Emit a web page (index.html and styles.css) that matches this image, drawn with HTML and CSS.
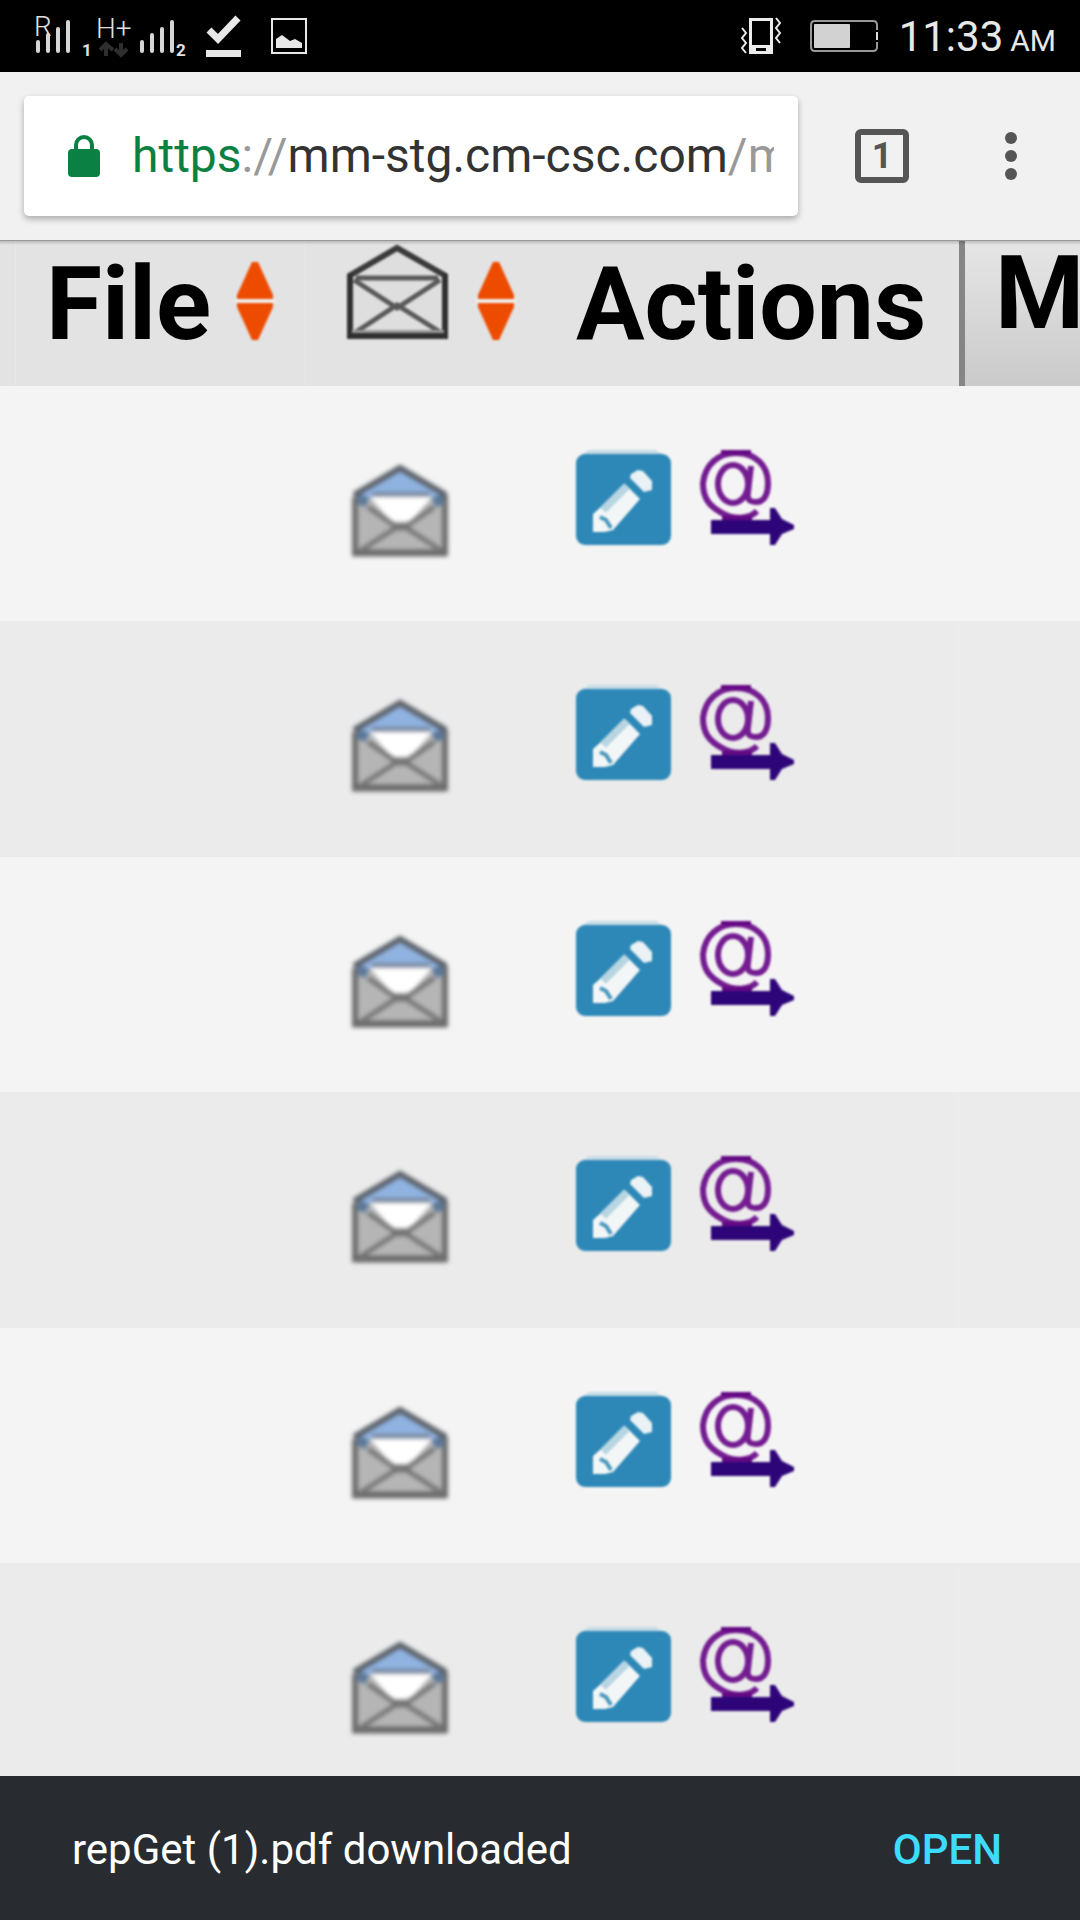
FILE: index.html
```html
<!DOCTYPE html>
<html lang="en">
<head>
<meta charset="utf-8">
<meta name="viewport" content="width=device-width, initial-scale=1">
<title>Messages</title>
<link rel="stylesheet" href="styles.css">
</head>
<body>
<svg class="defs" aria-hidden="true">
  <symbol id="envelope" viewBox="0 0 118 96">
    <path d="M18 32 64 6l47 26v63H18z" fill="#b5b5b5"/>
    <path d="M20 33 64 6l45 27-9 8-6-7H36l-7 8z" fill="#8fb2e0"/>
    <path d="M34 36h62L72 64H58z" fill="#fff"/>
    <path d="M19 36v59M109 34v61" stroke="#6c6c6c" stroke-width="6"/>
    <path d="M16 92h95" stroke="#6a6a6a" stroke-width="7"/>
    <path d="M18 34 64 7l46 27" fill="none" stroke="#5a6068" stroke-width="6"/>
    <path d="M36 33h58" stroke="#7787a0" stroke-width="4"/>
    <path d="M22 37l9 5M107 37l-9 5" stroke="#5b7898" stroke-width="10"/>
    <path d="M32 46l26 18h14l26-18M58 68 24 90M72 68l34 22" fill="none" stroke="#777" stroke-width="5"/>
    <path d="M56 66h18" stroke="#747474" stroke-width="7"/>
  </symbol>
  <symbol id="sort" viewBox="0 0 40 78">
    <path d="M17 0h6l15 33v4H2v-4zM2 41h36v4L23 78h-6L2 45z" fill="#ed4c00"/>
    <path d="M0 39h40" stroke="#f3efed" stroke-width="4"/>
  </symbol>
  <symbol id="edit" viewBox="0 0 96 96">
    <path d="M13 0h67l8 5H5z" fill="#c6dce7"/>
    <rect x="0" y="4" width="95" height="91" rx="9" fill="#2d88b7"/>
    <path d="M50 35 64 49 37 80l-8 2H17V64z" fill="#f3f6f7"/>
    <path d="M55 24l7-4 5 1 9 10v9l-8 2-14-14z" fill="#eaf2f5"/>
    <path d="M27 60l24-24" stroke="#b8d5e2" stroke-width="8"/>
    <path d="M24 67l6 3 5 8" fill="none" stroke="#4b98bd" stroke-width="4"/>
  </symbol>
  <symbol id="forward" viewBox="0 0 96 96">
    <path d="M57 61C50 69 34 70 22 63 9 56 3 48 3 33 5 15 18 3 36 3c20 0 32 13 32 30 0 12-4 19-12 19-8 0-9-4-8-10l3-26" fill="none" stroke="#741c91" stroke-width="6"/>
    <ellipse cx="33" cy="34" rx="15" ry="19" fill="none" stroke="#741c91" stroke-width="6"/>
    <path d="M21 2h30M22 68h30" stroke="#640984" stroke-width="5"/>
    <path d="M11 70h59V58h5l7 11 12 6v4l-12 5-7 11h-5V84H11z" fill="#2e0579"/>
  </symbol>
</svg>

<header class="status">
  <svg class="status-icon" width="150" height="72" viewBox="36 0 150 72">
    <g stroke="#d6d6d6" stroke-width="4" stroke-linecap="round">
      <path d="M38 42v9M48 35v16M58 29v22M68 22v29M142 42v9M152 35v16M162 29v22M172 22v29"/>
    </g>
    <g fill="none" stroke="#2e2e2e" stroke-width="4">
      <path d="M106 56V45M100 50l6-6 7 6M121 43v11M115 49l6 6 6-6"/>
    </g>
    <text class="net" x="34" y="36">R</text>
    <text class="net" x="96" y="38">H+</text>
    <text class="sim" x="82" y="56">1</text>
    <text class="sim" x="176" y="56">2</text>
  </svg>
  <svg class="status-icon" width="45" height="72" viewBox="206 0 45 72">
    <path d="M209 30l9 9 20-21" fill="none" stroke="#e8e8e8" stroke-width="7"/>
    <path d="M206 53.500h35" stroke="#e8e8e8" stroke-width="7"/>
  </svg>
  <svg class="status-icon" width="36" height="72" viewBox="271 0 36 72">
    <rect x="272" y="19" width="34" height="34" fill="none" stroke="#e8e8e8" stroke-width="2"/>
    <path d="M276 48v-9l6-4 8 6 5-2 7 4v5z" fill="#e8e8e8"/>
  </svg>
  <span class="spacer"></span>
  <svg class="status-icon" width="42" height="72" viewBox="740 0 42 72">
    <path d="M748 18h24v36h-24zM751 21v24h18V21zM755 48v3h10v-3z" fill="#ececec" fill-rule="evenodd"/>
    <path d="M741 28l4 5-4 5 4 5-4 5 4 5M775 18l4 5-4 5 4 5-4 5 4 5" fill="none" stroke="#ececec" stroke-width="2"/>
  </svg>
  <svg class="status-icon battery" width="70" height="72" viewBox="808 0 70 72">
    <path d="M876 30v-5q0-4-4-4h-58q-4 0-4 4v22q0 4 4 4h58q4 0 4-4v-5" fill="none" stroke="#999" stroke-width="2"/>
    <path d="M876 32v8" stroke="#ddd" stroke-width="2"/>
    <rect x="813" y="24" width="36" height="24" rx="1" fill="#d2d2d2"/>
  </svg>
  <time class="clock"><span>11:33</span><small>AM</small></time>
</header>

<nav class="toolbar" aria-label="Browser">
  <div class="address">
    <svg width="32" height="42" viewBox="0 0 32 42" aria-hidden="true">
      <rect y="14" width="32" height="28" rx="4" fill="#0b8043"/>
      <path d="M8 16v-6a8 8 0 0 1 16 0v6" fill="none" stroke="#0b8043" stroke-width="4"/>
    </svg>
    <div class="url" role="textbox" aria-label="Address" tabindex="0"><span class="scheme">https</span><span class="faint">://</span>mm-stg.cm-csc.com<span class="faint">/m</span></div>
  </div>
  <button class="tabs" type="button" aria-label="Open tabs">1</button>
  <button class="more" type="button" aria-label="More options">
    <svg width="12" height="48" viewBox="0 0 12 48"><g fill="#555"><circle cx="6" cy="6" r="6"/><circle cx="6" cy="24" r="6"/><circle cx="6" cy="42" r="6"/></g></svg>
  </button>
</nav>

<main class="page">
  <table class="mail">
    <colgroup><col class="c-edge"><col class="c-file"><col class="c-read"><col class="c-actions"><col></colgroup>
    <thead>
      <tr>
        <td></td>
        <th scope="col"><div class="head">File<button class="sort" type="button" aria-label="Sort by file"><svg><use href="#sort"/></svg></button></div></th>
        <th scope="col" class="read"><div class="head">
          <svg class="soft" width="118" height="96" viewBox="0 0 118 96" role="img" aria-label="Read">
            <path d="M13 31 61 5l49 26v62H13z" fill="#dedede"/>
            <path d="M13 32 61 4l49 28" fill="none" stroke="#3a3a3a" stroke-width="6"/>
            <path d="M20 34h82" stroke="#5a5a5a" stroke-width="5"/>
            <path d="M18 36l43 28 43-28M20 88l41-27 43 27" fill="none" stroke="#5a5a5a" stroke-width="5"/>
            <path d="M14 30v62M109 30v62" stroke="#303030" stroke-width="6"/>
            <path d="M16 88h92" stroke="#999" stroke-width="4"/>
            <path d="M11 92h101" stroke="#303030" stroke-width="6"/>
          </svg>
          <button class="sort" type="button" aria-label="Sort by read state"><svg><use href="#sort"/></svg></button></div></th>
        <th scope="col"><div class="head">Actions</div></th>
        <th scope="col" class="next"><div class="head">M</div></th>
      </tr>
    </thead>
    <tbody>
      <tr><td></td><td></td><td><svg class="envelope"><use href="#envelope"/></svg></td><td><div class="actions"><button type="button" aria-label="Edit"><svg><use href="#edit"/></svg></button><button type="button" aria-label="Forward"><svg><use href="#forward"/></svg></button></div></td><td></td></tr>
      <tr><td></td><td></td><td><svg class="envelope"><use href="#envelope"/></svg></td><td><div class="actions"><button type="button" aria-label="Edit"><svg><use href="#edit"/></svg></button><button type="button" aria-label="Forward"><svg><use href="#forward"/></svg></button></div></td><td></td></tr>
      <tr><td></td><td></td><td><svg class="envelope"><use href="#envelope"/></svg></td><td><div class="actions"><button type="button" aria-label="Edit"><svg><use href="#edit"/></svg></button><button type="button" aria-label="Forward"><svg><use href="#forward"/></svg></button></div></td><td></td></tr>
      <tr><td></td><td></td><td><svg class="envelope"><use href="#envelope"/></svg></td><td><div class="actions"><button type="button" aria-label="Edit"><svg><use href="#edit"/></svg></button><button type="button" aria-label="Forward"><svg><use href="#forward"/></svg></button></div></td><td></td></tr>
      <tr><td></td><td></td><td><svg class="envelope"><use href="#envelope"/></svg></td><td><div class="actions"><button type="button" aria-label="Edit"><svg><use href="#edit"/></svg></button><button type="button" aria-label="Forward"><svg><use href="#forward"/></svg></button></div></td><td></td></tr>
      <tr><td></td><td></td><td><svg class="envelope"><use href="#envelope"/></svg></td><td><div class="actions"><button type="button" aria-label="Edit"><svg><use href="#edit"/></svg></button><button type="button" aria-label="Forward"><svg><use href="#forward"/></svg></button></div></td><td></td></tr>
    </tbody>
  </table>
</main>

<footer class="snackbar">
  <span>repGet (1).pdf downloaded</span>
  <button type="button">OPEN</button>
</footer>
</body>
</html>
```
FILE: styles.css
```css
* { box-sizing: border-box; }

body {
  margin: 0;
  height: 100vh;
  display: flex;
  flex-direction: column;
  overflow: hidden;
  background: #f4f4f4;
  color: #000;
  font-family: Roboto, "Liberation Sans", sans-serif;
}

button {
  margin: 0;
  padding: 0;
  border: 0;
  background: none;
  font: inherit;
  color: inherit;
}

svg { display: block; flex: none; }

.defs { position: absolute; width: 0; height: 0; }

.status {
  flex: none;
  display: flex;
  align-items: center;
  gap: 20px;
  height: 72px;
  padding: 0 24px 0 36px;
  background: #000;
  color: #e8e8e8;
}

.status-icon { overflow: visible; }
.spacer { flex: 1; }
.battery { margin-left: 6px; }
.net { font-size: 28px; font-weight: 300; fill: #e0e0e0; }
.sim { font-size: 17px; font-weight: 700; fill: #e0e0e0; }

.clock {
  display: flex;
  align-items: baseline;
  gap: 7px;
  padding-top: 5px;
  font-size: 42px;
  line-height: 48px;
  white-space: nowrap;
}

.clock small { font-size: 30px; }

.toolbar {
  flex: none;
  display: flex;
  align-items: center;
  height: 168px;
  padding: 0 63px 0 24px;
  background: #f1f1f1;
}

.address {
  flex: 1;
  min-width: 0;
  display: flex;
  align-items: center;
  gap: 32px;
  height: 120px;
  padding: 0 24px 0 44px;
  border-radius: 5px;
  background: #fff;
  box-shadow: 0 3px 6px rgba(0, 0, 0, 0.3);
}

.url {
  flex: 1;
  min-width: 0;
  overflow: hidden;
  white-space: nowrap;
  font-size: 48px;
  line-height: 60px;
  color: #333;
}

.scheme { color: #0b8043; }
.faint { color: #999; }

.tabs {
  width: 54px;
  height: 54px;
  margin-left: 57px;
  border: 6px solid #555;
  border-radius: 6px;
  color: #555;
  font-size: 36px;
  line-height: 42px;
  font-weight: 700;
}

.more { margin-left: 96px; }

.page {
  flex: 1 1 0;
  min-height: 0;
  overflow: hidden;
  position: relative;
}

/* shadow the toolbar casts on the scrolled page */
.page::before {
  content: "";
  position: absolute;
  inset: 0 0 auto;
  height: 5px;
  background: linear-gradient(#999 0 1px, rgba(0, 0, 0, 0.18) 1px, rgba(0, 0, 0, 0));
}

.mail {
  width: 100%;
  table-layout: fixed;
  border-collapse: separate;
  border-spacing: 0;
}

.c-edge { width: 16px; }
.c-file { width: 290px; }
.c-read { width: 240px; }
.c-actions { width: 413px; }

.mail th,
.mail td {
  padding: 0;
  vertical-align: top;
  text-align: left;
}

.mail thead tr { height: 146px; background: #e3e3e3; }
.mail thead :is(td, th):nth-child(-n+2) { border-right: 1px solid #e8e8e8; }

.head {
  display: flex;
  align-items: flex-start;
  gap: 24px;
  padding: 14px 0 0 30px;
  font-size: 102px;
  line-height: 100px;
  font-weight: 700;
}

.read .head { padding-top: 4px; gap: 22px; align-items: flex-end; line-height: 0; }

.mail .next {
  overflow: hidden;
  border-left: 6px solid #858585;
  background: linear-gradient(#e6e6e6, #cacaca);
}

.next .head { padding-top: 3px; }

.sort { margin-top: 8px; }
.sort svg { width: 40px; height: 78px; filter: blur(1px); }
.soft { filter: blur(1px); }

.mail tbody tr { height: 235px; }
.mail tbody tr:nth-child(even) { height: 236px; background: #ebebeb; }
.mail tbody tr:nth-child(even) td:nth-child(4) { border-right: 1px solid #eee; }

.envelope {
  width: 118px;
  height: 96px;
  margin: 75px 0 0 30px;
  filter: blur(2px);
}

.actions {
  display: flex;
  gap: 28px;
  padding: 64px 0 0 30px;
}

.actions svg { width: 96px; height: 96px; filter: blur(1px); }

.snackbar {
  flex: none;
  display: flex;
  align-items: center;
  justify-content: space-between;
  height: 144px;
  padding: 4px 78px 0 72px;
  background: #282c30;
  color: #fff;
  font-size: 42px;
  line-height: 48px;
}

.snackbar button { color: #3ddcff; font-weight: 500; }
```
